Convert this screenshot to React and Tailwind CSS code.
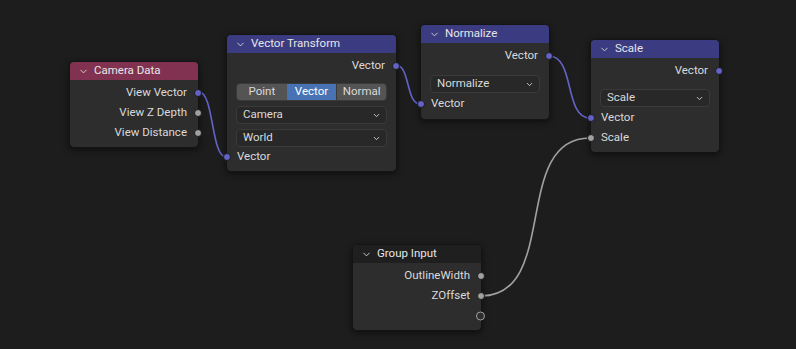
import { ChevronDown } from 'lucide-react';

// socket colours
const VEC = 'bg-[#6363c7]';
const FLT = 'bg-[#a1a1a1]';

const Socket = ({ side, kind }) => (
  <span
    className={`absolute top-1/2 -translate-y-1/2 rounded-full border ${
      kind === 'empty' ? 'w-[9px] h-[9px]' : 'w-[8px] h-[8px]'
    } ${side === 'left' ? '-left-[4px]' : '-right-[4px]'} ${
      kind === 'empty' ? 'bg-[#2d2d2d] border-[#a1a1a1]' : kind === 'vec' ? `${VEC} border-[#1a1a1a]` : `${FLT} border-[#1a1a1a]`
    }`}
  />
);

const Out = ({ label, kind }) => (
  <div className="relative h-5 flex items-center justify-end pr-[11px]">
    {label}
    <Socket side="right" kind={kind} />
  </div>
);

const In = ({ label, kind }) => (
  <div className="relative h-5 flex items-center pl-[10px]">
    {label}
    <Socket side="left" kind={kind} />
  </div>
);

const Dropdown = ({ label }) => (
  <div className="mx-[9px] h-[18px] rounded-[4px] bg-[#282828] border border-[#3a3a3a] flex items-center justify-between pl-[6px] pr-[5px]">
    <span>{label}</span>
    <ChevronDown size={9} strokeWidth={2.5} className="text-[#cfcfcf]" />
  </div>
);

const Node = ({ title, header, x, y, w, children }) => (
  <div
    className="absolute rounded-[5px] bg-[#2d2d2d] shadow-[0_2px_6px_rgba(0,0,0,0.55)] border border-[#141414]"
    style={{ left: x, top: y, width: w }}
  >
    <div className={`h-[18px] rounded-t-[4px] flex items-center pl-[8px] gap-[5px] ${header}`}>
      <ChevronDown size={11} strokeWidth={2} className="text-[#d5d5d5]" />
      <span className="text-[#e6e6e6]">{title}</span>
    </div>
    {children}
  </div>
);

const App = () => {
  return (
    <div
      className="relative w-[796px] h-[349px] bg-[#1d1d1d] overflow-hidden text-[11.5px] text-[#dadada] leading-none"
      style={{ fontFamily: 'Roboto, "DejaVu Sans", sans-serif' }}
    >
      {/* wires */}
      <svg className="absolute inset-0" width="796" height="349">
        <g fill="none" strokeWidth="1.6">
          <path d="M199 92 C 214 92, 211 157, 226 157" stroke="#6363c7" />
          <path d="M396 65 C 410 65, 406 104, 420 104" stroke="#6363c7" />
          <path d="M549 56 C 575 56, 564 118, 590 118" stroke="#6363c7" />
          <path d="M481 296 C 560 296, 511 138, 590 138" stroke="#a1a1a1" />
        </g>
      </svg>

      <Node title="Camera Data" header="bg-[#813251]" x={69} y={61} w={130}>
        <div className="pt-[3px] pb-[4px]">
          <Out label="View Vector" kind="vec" />
          <Out label="View Z Depth" kind="flt" />
          <Out label="View Distance" kind="flt" />
        </div>
      </Node>

      <Node title="Vector Transform" header="bg-[#3b3b82]" x={226} y={34} w={171}>
        <div className="pt-[3px] pb-[4px]">
          <Out label="Vector" kind="vec" />
          <div className="mx-[9px] mt-[7px] h-[18px] grid grid-cols-3 rounded-[4px] overflow-hidden border border-[#3a3a3a]">
            <div className="bg-[#545454] flex items-center justify-center">Point</div>
            <div className="bg-[#4772b3] flex items-center justify-center text-white">Vector</div>
            <div className="bg-[#545454] flex items-center justify-center border-l border-[#3a3a3a]">Normal</div>
          </div>
          <div className="mt-[5px]"><Dropdown label="Camera" /></div>
          <div className="mt-[5px]"><Dropdown label="World" /></div>
          <In label="Vector" kind="vec" />
        </div>
      </Node>

      <Node title="Normalize" header="bg-[#3b3b82]" x={420} y={24} w={130}>
        <div className="pt-[3px] pb-[5px]">
          <Out label="Vector" kind="vec" />
          <div className="mt-[9px] mb-[1px]"><Dropdown label="Normalize" /></div>
          <In label="Vector" kind="vec" />
        </div>
      </Node>

      <Node title="Scale" header="bg-[#3b3b82]" x={590} y={39} w={130}>
        <div className="pt-[3px] pb-[4px]">
          <Out label="Vector" kind="vec" />
          <div className="mt-[8px] mb-[1px]"><Dropdown label="Scale" /></div>
          <In label="Vector" kind="vec" />
          <In label="Scale" kind="flt" />
        </div>
      </Node>

      <Node title="Group Input" header="bg-[#1f1f1f]" x={352} y={244} w={130}>
        <div className="pt-[3px] pb-[4px]">
          <Out label="OutlineWidth" kind="flt" />
          <Out label="ZOffset" kind="flt" />
          <Out label="" kind="empty" />
        </div>
      </Node>
    </div>
  );
};

export default App;
